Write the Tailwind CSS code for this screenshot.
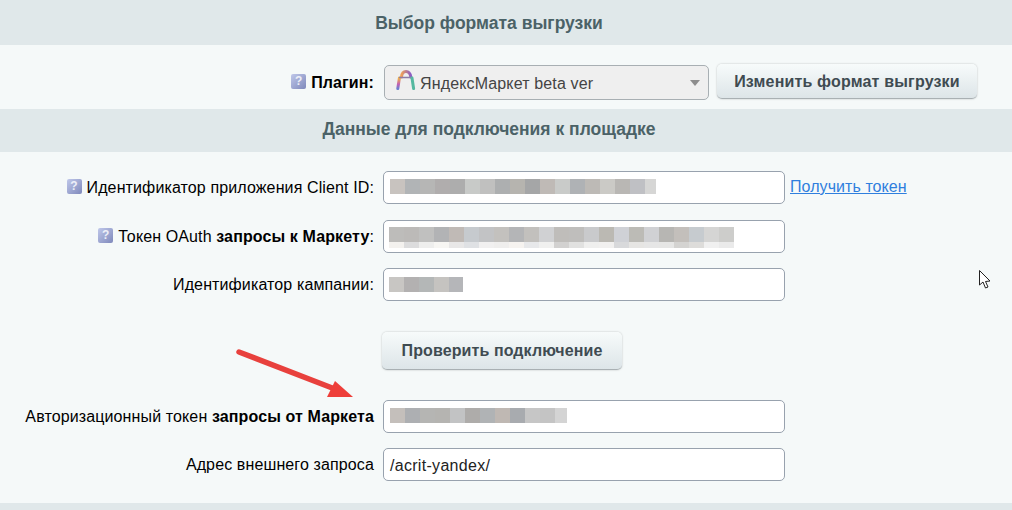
<!DOCTYPE html>
<html>
<head>
    <meta charset="utf-8">
    <title>Выбор формата выгрузки</title>
    <script src="https://cdn.jsdelivr.net/npm/@tailwindcss/browser@4"></script>
</head>
<body class="relative w-[1012px] h-[510px] overflow-hidden bg-[#f5f9f9] font-['Liberation_Sans',Arial,sans-serif] text-[16px] text-black">

    <!-- Format -->
    <div class="h-[45px] bg-[#e0e8ea] flex items-center justify-center pr-[34px] pt-[1px] font-bold text-[17.5px] text-[#4b6267]">Выбор формата выгрузки</div>
    <div class="h-[64px] flex pt-[20px]">
        <div class="w-[374px] h-[35px] flex items-center justify-end font-bold tracking-[0.1px]">
            <span class="w-[15px] h-[15px] mr-[5px] mb-[3px] rounded-[2px] bg-gradient-to-br from-[#c0c8ea] to-[#7f89bb] text-white/80 text-[12px] leading-[15px] text-center font-bold">?</span>
            <span>Плагин:</span>
        </div>
        <div class="relative ml-[10px] w-[325px] h-[35px] rounded-[5px] border border-[#a8afb3] bg-[#efefef] flex items-center pl-[35px] pt-[2px] text-[#444] tracking-[0.14px]">
            <svg class="absolute left-[11px] top-[4px] w-[20px] h-[20px]" viewBox="0 0 20 20" fill="none" stroke-linecap="round">
                <defs>
                    <linearGradient id="logo-left" x1="0" y1="0" x2="0" y2="1">
                        <stop offset="0" stop-color="#f2b544"/>
                        <stop offset="0.6" stop-color="#c25fb4"/>
                        <stop offset="1" stop-color="#6b7fd0"/>
                    </linearGradient>
                    <linearGradient id="logo-top" x1="0" y1="0" x2="1" y2="0">
                        <stop offset="0" stop-color="#ef9f5a"/>
                        <stop offset="1" stop-color="#8b5cc4"/>
                    </linearGradient>
                </defs>
                <path d="M1.8 18.5 L3.4 8" stroke="url(#logo-left)" stroke-width="3"/>
                <path d="M5.5 7 C5.8 3.5 7.5 1.6 10 1.6 C12.5 1.6 14.2 3.5 14.8 7" stroke="url(#logo-top)" stroke-width="3"/>
                <path d="M3.4 7.5 H16" stroke="#8d7ca8" stroke-width="1.4"/>
                <path d="M16 8 L17.6 18.5" stroke="#55b8a0" stroke-width="3"/>
            </svg>
            <span>ЯндексМаркет beta ver</span>
            <span class="absolute right-[8px] top-[14px] w-0 h-0 border-x-[5px] border-x-transparent border-t-[6px] border-t-[#8d8d8d]"></span>
        </div>
        <button class="ml-[8px] -mt-[1px] w-[260px] h-[35px] pt-[1px] rounded-[5px] border-b border-b-[#a9b0b3] bg-gradient-to-b from-[#f7fbfb] to-[#dde5e8] shadow-[0_0_2px_rgba(0,0,0,0.25)] font-bold text-[#3f4b51] tracking-[0.17px]">Изменить формат выгрузки</button>
    </div>

    <!-- Connection -->
    <div class="h-[43px] bg-[#e0e8ea] flex items-center justify-center pr-[34px] pb-[3px] font-bold text-[17.5px] text-[#4b6267]">Данные для подключения к площадке</div>

    <div class="flex h-[33px] mt-[19px]">
        <div class="w-[374px] flex items-center justify-end tracking-[0.12px] pt-[1px]">
            <span class="w-[15px] h-[15px] mr-[5px] mb-[3px] rounded-[2px] bg-gradient-to-br from-[#c0c8ea] to-[#7f89bb] text-white/80 text-[12px] leading-[15px] text-center font-bold">?</span>
            <span>Идентификатор приложения Client ID:</span>
        </div>
        <div class="ml-[9px] w-[402px] h-[33px] rounded-[5px] border border-[#98a2ae] bg-white pl-[6px] pt-[7px]">
            <div class="flex h-[15px]">
                <i class="w-[15px] bg-[#c8c3bf]"></i><i class="w-[15px] bg-[#b1b4b6]"></i><i class="w-[15px] bg-[#b6b6b5]"></i><i class="w-[15px] bg-[#b0adad]"></i><i class="w-[15px] bg-[#adadad]"></i><i class="w-[15px] bg-[#c8cac8]"></i><i class="w-[15px] bg-[#c0c0bf]"></i><i class="w-[15px] bg-[#adafb0]"></i><i class="w-[15px] bg-[#b6b4af]"></i><i class="w-[15px] bg-[#a5a6a7]"></i><i class="w-[15px] bg-[#bfbab6]"></i><i class="w-[15px] bg-[#c9cbc9]"></i><i class="w-[15px] bg-[#afb2b5]"></i><i class="w-[15px] bg-[#bdbab6]"></i><i class="w-[15px] bg-[#cbcac6]"></i><i class="w-[15px] bg-[#b9b7b4]"></i><i class="w-[15px] bg-[#bfc0c4]"></i><i class="w-[11px] bg-[#d6d6d5]"></i>
            </div>
        </div>
        <a href="#" class="ml-[5px] leading-[31px] text-[#2f7fde] underline tracking-[0.07px]">Получить токен</a>
    </div>

    <div class="flex h-[33px] mt-[16px]">
        <div class="w-[374px] flex items-center justify-end tracking-[0.12px] pt-[1px]">
            <span class="w-[15px] h-[15px] mr-[5px] mb-[3px] rounded-[2px] bg-gradient-to-br from-[#c0c8ea] to-[#7f89bb] text-white/80 text-[12px] leading-[15px] text-center font-bold">?</span>
            <span>Токен OAuth <b>запросы к Маркету</b>:</span>
        </div>
        <div class="ml-[9px] w-[402px] h-[33px] rounded-[5px] border border-[#98a2ae] bg-white pl-[5px] pt-[6px]">
            <div class="flex h-[15px]">
                <i class="w-[15px] bg-[#bdbcba]"></i><i class="w-[15px] bg-[#bcbab8]"></i><i class="w-[15px] bg-[#c0c0bf]"></i><i class="w-[15px] bg-[#b2b3b5]"></i><i class="w-[15px] bg-[#c0bab6]"></i><i class="w-[15px] bg-[#c6cace]"></i><i class="w-[15px] bg-[#c2c3c5]"></i><i class="w-[15px] bg-[#c3c1be]"></i><i class="w-[15px] bg-[#b4b5b7]"></i><i class="w-[15px] bg-[#c2c0bd]"></i><i class="w-[15px] bg-[#d0d1d3]"></i><i class="w-[15px] bg-[#bfbdba]"></i><i class="w-[15px] bg-[#bfbebc]"></i><i class="w-[15px] bg-[#c9cacc]"></i><i class="w-[15px] bg-[#bbb9b3]"></i><i class="w-[15px] bg-[#cfd1d6]"></i><i class="w-[15px] bg-[#bcbbb6]"></i><i class="w-[15px] bg-[#d0d1d4]"></i><i class="w-[15px] bg-[#b7b6b3]"></i><i class="w-[15px] bg-[#c3bfbb]"></i><i class="w-[15px] bg-[#c6cbcf]"></i><i class="w-[15px] bg-[#d5d5d4]"></i><i class="w-[15px] bg-[#cdcdcb]"></i>
            </div>
            <div class="flex h-[6px]">
                <i class="w-[15px] bg-[#f3f1ee]"></i><i class="w-[15px] bg-[#dcdcdd]"></i><i class="w-[15px] bg-[#eeeeed]"></i><i class="w-[15px] bg-[#f7f6f3]"></i><i class="w-[15px] bg-[#e8e7e7]"></i><i class="w-[15px] bg-[#dfe1e4]"></i><i class="w-[15px] bg-[#f1f0f0]"></i><i class="w-[15px] bg-[#efeeed]"></i><i class="w-[15px] bg-[#f6f3f0]"></i><i class="w-[15px] bg-[#e7e8ea]"></i><i class="w-[15px] bg-[#f0f0ef]"></i><i class="w-[15px] bg-[#d2d1d0]"></i><i class="w-[15px] bg-[#e1e1e0]"></i><i class="w-[15px] bg-[#efefee]"></i><i class="w-[15px] bg-[#f1f0ef]"></i><i class="w-[15px] bg-[#d8d9db]"></i><i class="w-[15px] bg-[#e6e5e3]"></i><i class="w-[15px] bg-[#e6e6e6]"></i><i class="w-[15px] bg-[#e6e6e5]"></i><i class="w-[15px] bg-[#d4d3d1]"></i><i class="w-[15px] bg-[#dddcda]"></i><i class="w-[15px] bg-[#f0f0f0]"></i><i class="w-[15px] bg-[#eaeaea]"></i>
            </div>
        </div>
    </div>

    <div class="flex h-[33px] mt-[15px]">
        <div class="w-[374px] flex items-center justify-end tracking-[0.12px] pt-[1px]">Идентификатор кампании:</div>
        <div class="ml-[9px] w-[402px] h-[33px] rounded-[5px] border border-[#98a2ae] bg-white pl-[5px] pt-[8px]">
            <div class="flex h-[15px]">
                <i class="w-[15px] bg-[#c8c6c3]"></i><i class="w-[15px] bg-[#b3b1b1]"></i><i class="w-[15px] bg-[#b4b7b7]"></i><i class="w-[15px] bg-[#c5c3c0]"></i><i class="w-[14px] bg-[#b5b6b9]"></i>
            </div>
        </div>
    </div>

    <button class="block ml-[382px] mt-[31px] w-[240px] h-[38px] rounded-[5px] border-b border-b-[#a9b0b3] bg-gradient-to-b from-[#f7fbfb] to-[#dde5e8] shadow-[0_0_2px_rgba(0,0,0,0.25)] font-bold text-[#3f4b51] tracking-[0.1px]">Проверить подключение</button>

    <div class="flex h-[33px] mt-[30px]">
        <div class="w-[374px] flex items-center justify-end tracking-[0.12px] pt-[1px]"><span>Авторизационный токен <b>запросы от Маркета</b></span></div>
        <div class="ml-[9px] w-[402px] h-[33px] rounded-[5px] border border-[#98a2ae] bg-white pl-[6px] pt-[7px]">
            <div class="flex h-[15px]">
                <i class="w-[15px] bg-[#c4bfbb]"></i><i class="w-[15px] bg-[#adafb2]"></i><i class="w-[15px] bg-[#b5b5b3]"></i><i class="w-[15px] bg-[#b5b4b1]"></i><i class="w-[15px] bg-[#c2c3c4]"></i><i class="w-[15px] bg-[#aeacaa]"></i><i class="w-[15px] bg-[#b0b3b5]"></i><i class="w-[15px] bg-[#bfb8b3]"></i><i class="w-[15px] bg-[#a8abaf]"></i><i class="w-[15px] bg-[#c6c6c6]"></i><i class="w-[15px] bg-[#c4c4c4]"></i><i class="w-[12px] bg-[#d4d4d4]"></i>
            </div>
        </div>
    </div>

    <div class="flex h-[33px] mt-[15px]">
        <div class="w-[374px] flex items-center justify-end tracking-[0.12px] pt-[1px]">Адрес внешнего запроса</div>
        <div class="ml-[9px] w-[402px] h-[33px] rounded-[5px] border border-[#98a2ae] bg-white pl-[6px] pt-[2px] flex items-center tracking-[0.3px] text-[#222]">/acrit-yandex/</div>
    </div>

    <div class="h-[7px] mt-[22px] bg-[#e0e8ea]"></div>

    <!-- Annotation arrow -->
    <svg class="absolute left-[230px] top-[340px] w-[125px] h-[62px]" viewBox="0 0 125 62" fill="none">
        <path d="M9 12 L110 51" stroke="#e8413d" stroke-width="5.5" stroke-linecap="round"/>
        <path d="M105 41 L123 57 L97 57 Z" fill="#ee3f3a"/>
    </svg>

    <!-- Mouse pointer -->
    <svg class="absolute left-[978px] top-[269px] w-[14px] h-[21px]" viewBox="0 0 14 21">
        <path d="M1.5 1.5 V16 L5 13 L7.5 19 L10 18 L7.5 12.5 L12 12 Z" fill="#fff" stroke="#222" stroke-width="1"/>
    </svg>
</body>
</html>
